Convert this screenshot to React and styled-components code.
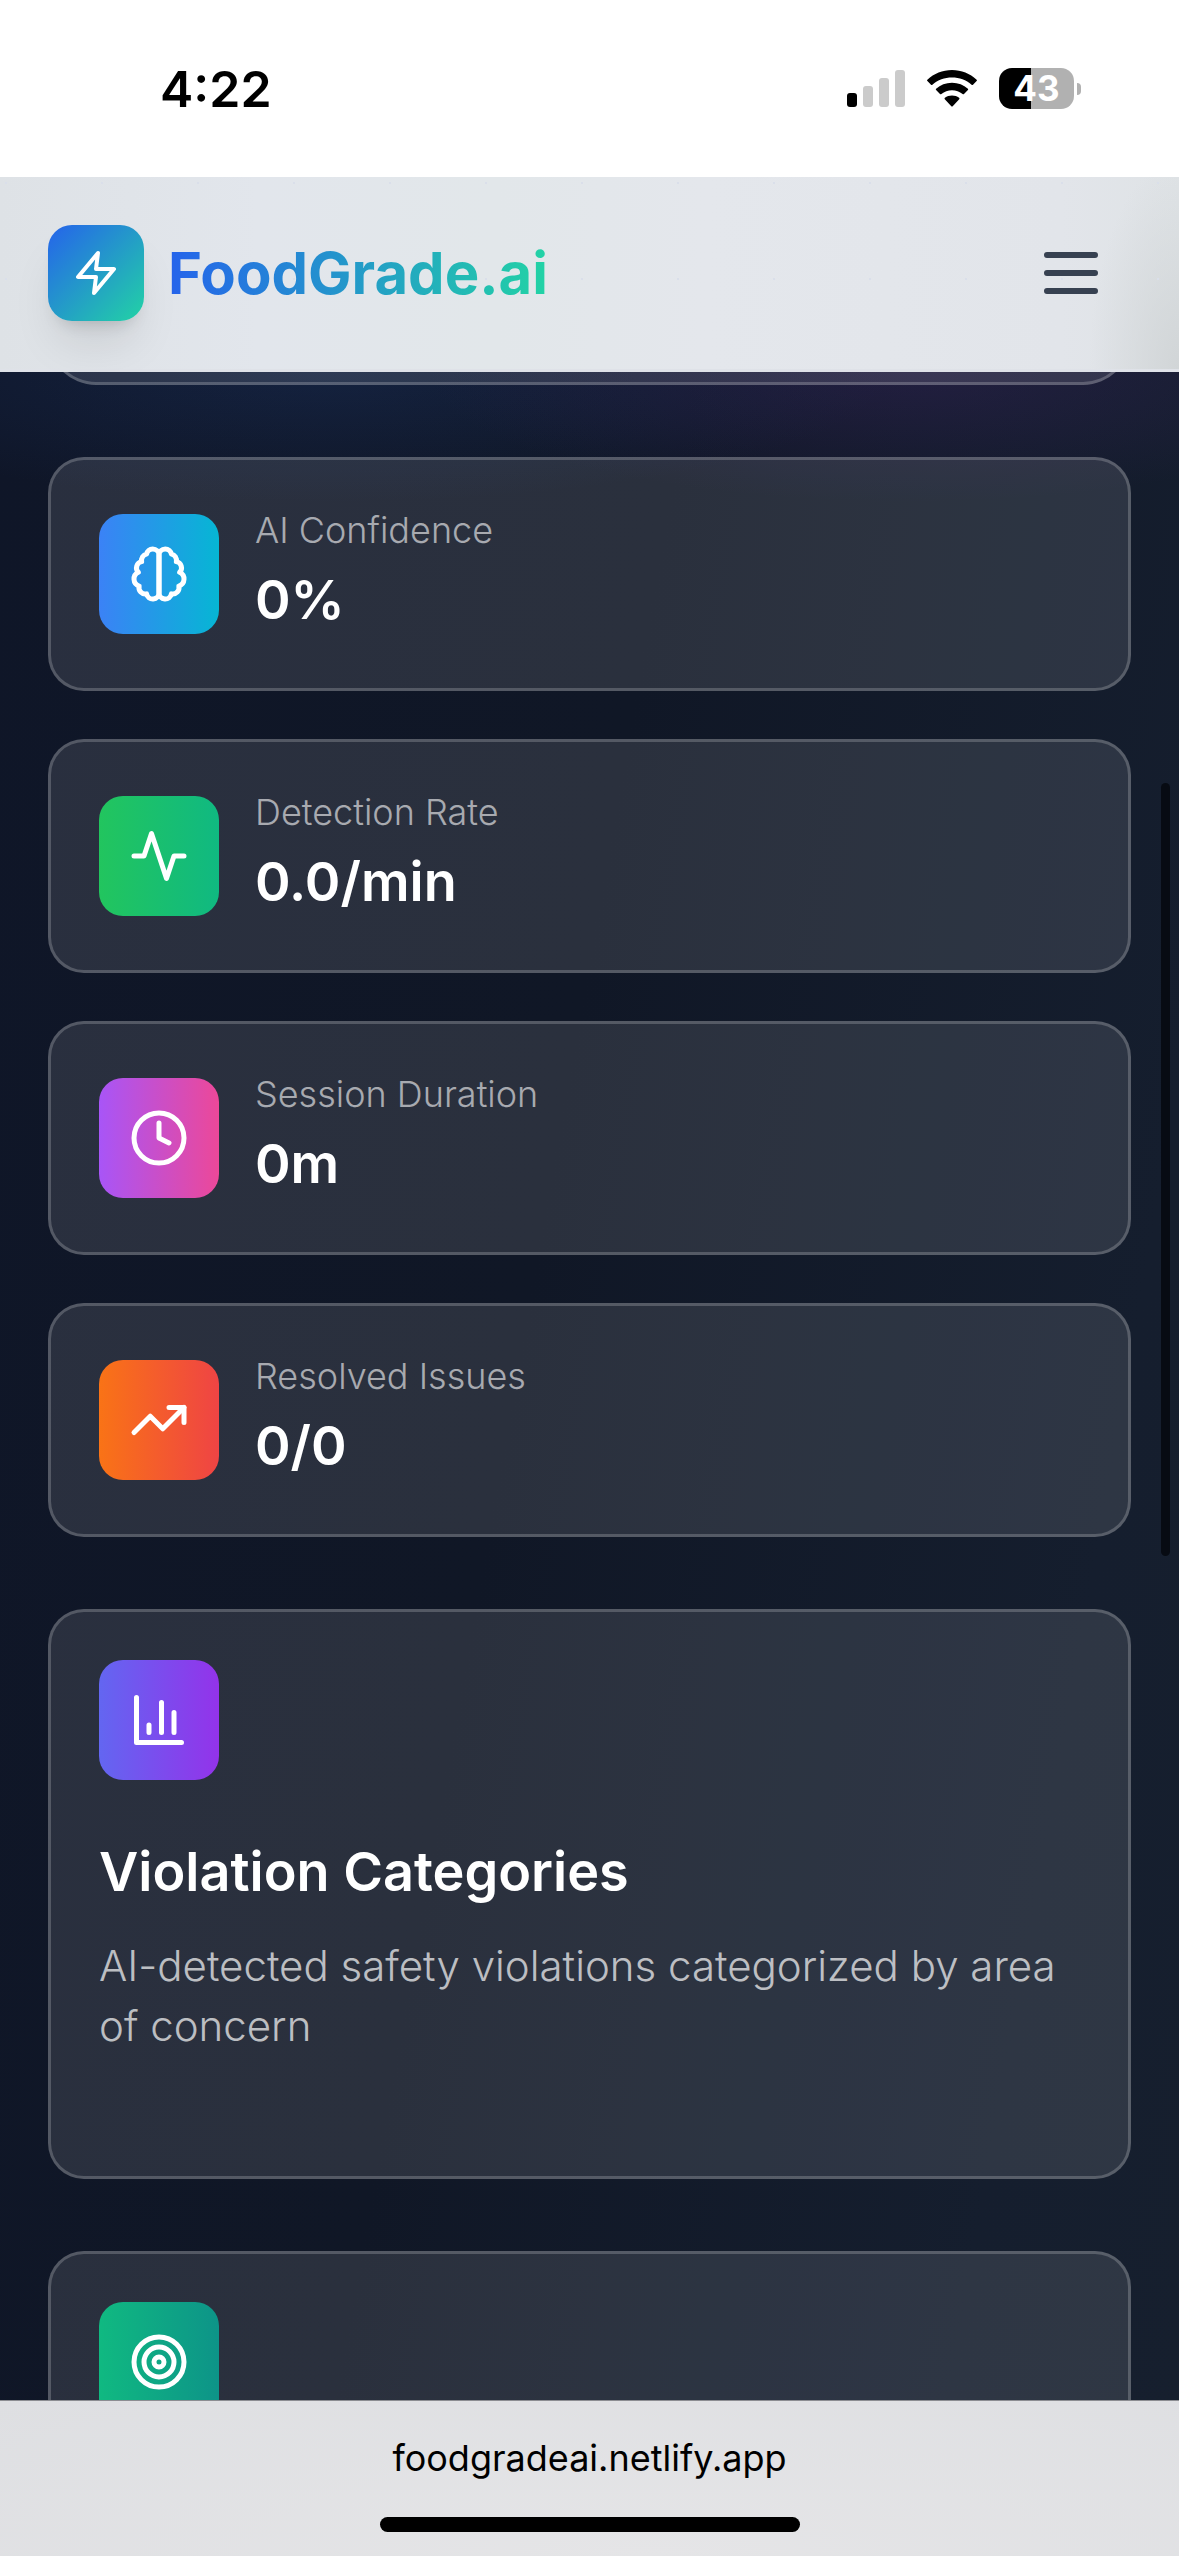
import React from 'react'
import styled, { createGlobalStyle } from 'styled-components'

const GlobalStyle = createGlobalStyle`
  *, *::before, *::after {
    box-sizing: border-box;
  }
  body {
    margin: 0;
    background: #0f172a;
    font-family: Inter, 'Liberation Sans', sans-serif;
  }
  h1, h2, p, dl, dt, dd {
    margin: 0;
    font-weight: inherit;
  }
`

const Screen = styled.div`
  display: flex;
  flex-direction: column;
  height: 100vh;
  overflow: hidden;
`

const StatusBar = styled.div`
  display: flex;
  align-items: center;
  justify-content: space-between;
  flex: none;
  height: 177px;
  padding: 0 98px 0 160px;
  background: #fff;
  color: #000;
`

const Time = styled.time`
  font-size: 50px;
  font-weight: 600;
  line-height: 60px;
`

const StatusIcons = styled.div`
  display: flex;
  align-items: center;
  gap: 22px;
`

const BatteryHolder = styled.div`
  display: flex;
  align-items: center;
  gap: 3px;
`

const Battery = styled.div`
  display: flex;
  align-items: center;
  justify-content: center;
  width: 75px;
  height: 41px;
  border-radius: 13px;
  background: linear-gradient(90deg, #000 43%, #b1b1b1 43%);
  color: #fff;
  font-size: 35px;
  font-weight: 700;
  line-height: 41px;
`

const BatteryNub = styled.div`
  width: 4px;
  height: 12px;
  border-radius: 0 4px 4px 0;
  background: #b1b1b1;
`

const Header = styled.header`
  display: flex;
  align-items: center;
  justify-content: space-between;
  flex: none;
  padding: 48px;
  border-bottom: 3px solid #dfe2e8;
  background:
    radial-gradient(circle at 6px 6px, #dadfea 1px, transparent 1px) 0 0 / 96px 96px,
    radial-gradient(ellipse 90px 210px at 100% 100%, #d1d5d7, rgba(209, 213, 215, 0)),
    linear-gradient(90deg, #dee2e6, #e2e6ec 22%, #e2e7ea 42%, #e4e7ec 60%, #e2e5ea 90%, #dfe3e6);
`

const Brand = styled.div`
  display: flex;
  align-items: center;
  gap: 24px;
`

const Logo = styled.div`
  display: flex;
  align-items: center;
  justify-content: center;
  width: 96px;
  height: 96px;
  border-radius: 24px;
  background: linear-gradient(135deg, #2563eb, #22d3a5);
  box-shadow: 0 30px 45px -9px rgba(0, 0, 0, 0.1), 0 12px 18px -12px rgba(0, 0, 0, 0.2);
  color: #fff;
`

const BrandName = styled.h1`
  background: linear-gradient(90deg, #2563eb, #22d3a5);
  background-clip: text;
  -webkit-background-clip: text;
  color: transparent;
  font-size: 58px;
  font-weight: 700;
  line-height: 84px;
`

const MenuButton = styled.button`
  display: flex;
  padding: 12px 24px;
  border: 0;
  background: none;
  color: #374151;
`

const Main = styled.main`
  position: relative;
  display: flex;
  flex-direction: column;
  flex: 1;
  gap: 72px;
  min-height: 0;
  padding: 0 48px;
  overflow: hidden;
  background:
    radial-gradient(ellipse 480px 130px at 77% 0, rgba(80, 45, 130, 0.26), rgba(80, 45, 130, 0)),
    radial-gradient(ellipse 560px 130px at 28% 0, rgba(35, 70, 140, 0.24), rgba(35, 70, 140, 0)),
    linear-gradient(100deg, #0f1628 0%, #101726 45%, #151e2e 85%, #161f2e 100%);
`

const Card = styled.section`
  flex: none;
  padding: 48px;
  border: 3px solid rgba(255, 255, 255, 0.2);
  border-radius: 36px;
  background: rgba(255, 255, 255, 0.11);
`

// end of the card that is scrolled under the header
const ScrolledCard = styled(Card)`
  height: 102px;
  margin-top: -89px;
  border-radius: 0 0 48px 48px;
`

const StatList = styled.div`
  display: flex;
  flex-direction: column;
  flex: none;
  gap: 48px;
`

const StatCard = styled(Card)`
  display: flex;
  align-items: center;
  gap: 36px;
`

const SectionCard = styled(Card)`
  padding-bottom: ${p => (p.$roomy ? 120 : 48)}px;
`

const Tile = styled.div`
  display: flex;
  align-items: center;
  justify-content: center;
  flex: none;
  width: 120px;
  height: 120px;
  border-radius: 24px;
  background: linear-gradient(90deg, ${p => p.$from}, ${p => p.$to});
  color: #fff;
`

const StatLabel = styled.dt`
  color: rgba(255, 255, 255, 0.6);
  font-size: 36px;
  font-weight: 300;
  line-height: 44px;
`

const StatValue = styled.dd`
  margin-top: 8px;
  color: #fff;
  font-size: 54px;
  font-weight: 600;
  line-height: 80px;
`

const SectionTitle = styled.h2`
  margin-top: 52px;
  color: #fff;
  font-size: 54px;
  font-weight: 600;
  line-height: 80px;
`

const SectionText = styled.p`
  margin-top: 24px;
  color: rgba(255, 255, 255, 0.7);
  font-size: 42px;
  font-weight: 300;
  line-height: 60px;
`

const ScrollThumb = styled.div`
  position: absolute;
  top: 411px;
  right: 9px;
  width: 9px;
  height: 773px;
  border-radius: 5px;
  background: #070b13;
`

const AddressBar = styled.footer`
  display: flex;
  flex-direction: column;
  align-items: center;
  flex: none;
  gap: 35px;
  padding: 33px 0 24px;
  border-top: 1px solid #8c8d92;
  background: radial-gradient(ellipse at 55% 100%, #e5e5e7, #dedfe2);
`

const Address = styled.a`
  color: #000;
  font-size: 36px;
  line-height: 48px;
  text-decoration: none;
`

const HomeIndicator = styled.div`
  width: 420px;
  height: 15px;
  border-radius: 8px;
  background: #000;
`

const Icon = ({ size = 60, children }) => (
  <svg
    width={size}
    height={size}
    viewBox="0 0 24 24"
    fill="none"
    stroke="currentColor"
    strokeWidth="2"
    strokeLinecap="round"
    strokeLinejoin="round"
    aria-hidden="true"
  >
    {children}
  </svg>
)

const IconTile = ({ from, to, children }) => (
  <Tile $from={from} $to={to}>
    <Icon>{children}</Icon>
  </Tile>
)

const stats = [
  {
    label: 'AI Confidence',
    value: '0%',
    from: '#3b82f6',
    to: '#06b6d4',
    icon: (
      <>
        <path d="M9.5 2A2.5 2.5 0 0 1 12 4.5v15a2.5 2.5 0 0 1-4.96.44 2.5 2.5 0 0 1-2.96-3.08 3 3 0 0 1-.34-5.58 2.5 2.5 0 0 1 1.32-4.24 2.5 2.5 0 0 1 1.98-3A2.5 2.5 0 0 1 9.5 2Z" />
        <path d="M14.5 2A2.5 2.5 0 0 0 12 4.5v15a2.5 2.5 0 0 0 4.96.44 2.5 2.5 0 0 0 2.96-3.08 3 3 0 0 0 .34-5.58 2.5 2.5 0 0 0-1.32-4.24 2.5 2.5 0 0 0-1.98-3A2.5 2.5 0 0 0 14.5 2Z" />
      </>
    ),
  },
  {
    label: 'Detection Rate',
    value: '0.0/min',
    from: '#22c55e',
    to: '#10b981',
    icon: <path d="M22 12h-4l-3 9L9 3l-3 9H2" />,
  },
  {
    label: 'Session Duration',
    value: '0m',
    from: '#a855f7',
    to: '#ec4899',
    icon: (
      <>
        <circle cx="12" cy="12" r="10" />
        <polyline points="12 6 12 12 16 14" />
      </>
    ),
  },
  {
    label: 'Resolved Issues',
    value: '0/0',
    from: '#f97316',
    to: '#ef4444',
    icon: (
      <>
        <polyline points="22 7 13.5 15.5 8.5 10.5 2 17" />
        <polyline points="16 7 22 7 22 13" />
      </>
    ),
  },
]

const SignalIcon = () => (
  <svg width="58" height="37" viewBox="0 0 58 37" aria-hidden="true">
    <rect x="0" y="23" width="10" height="14" rx="3" fill="#000" />
    <rect x="16" y="16" width="10" height="21" rx="3" fill="#cbcbcb" />
    <rect x="32" y="8" width="10" height="29" rx="3" fill="#cbcbcb" />
    <rect x="48" y="0" width="10" height="37" rx="3" fill="#cbcbcb" />
  </svg>
)

const WifiIcon = () => (
  <svg width="50" height="37" viewBox="0 0 50 37" aria-hidden="true">
    <path d="M25 0C34.5 0 43 3.6 49.6 9.7Q50.3 10.4 49.6 11.1L46 14.7Q45.3 15.4 44.6 14.7C39.2 9.9 32.4 7.5 25 7.5S10.8 9.900 5.4 14.7Q4.700 15.400 4 14.7L.4 11.1Q-.3 10.400.4 9.700C7 3.600 15.5 0 25 0Z" />
    <path d="M25 12.7C31.2 12.7 36.6 14.9 40.9 18.7Q41.6 19.4 40.9 20.1L37 24Q36.3 24.7 35.6 24C32.6 21.5 29 20.2 25 20.2S17.4 21.5 14.4 24Q13.7 24.7 13 24L9.1 20.1Q8.4 19.4 9.1 18.7C13.4 14.9 18.8 12.7 25 12.7Z" />
    <path d="M25 25.5C27.7 25.5 30.1 26.3 32.1 27.8Q32.9 28.5 32.2 29.2L25.7 36.2Q25 36.9 24.3 36.2L17.8 29.2Q17.1 28.5 17.9 27.8C19.9 26.3 22.3 25.5 25 25.5Z" />
  </svg>
)

const App = () => (
  <Screen>
    <GlobalStyle />
    <StatusBar>
      <Time>4:22</Time>
      <StatusIcons>
        <SignalIcon />
        <WifiIcon />
        <BatteryHolder>
          <Battery>43</Battery>
          <BatteryNub />
        </BatteryHolder>
      </StatusIcons>
    </StatusBar>
    <Header>
      <Brand>
        <Logo>
          <Icon size={48}>
            <polygon points="13 2 3 14 12 14 11 22 21 10 12 10 13 2" />
          </Icon>
        </Logo>
        <BrandName>FoodGrade.ai</BrandName>
      </Brand>
      <MenuButton type="button" aria-label="Open menu">
        <Icon size={72}>
          <path d="M4 6h16M4 12h16M4 18h16" />
        </Icon>
      </MenuButton>
    </Header>
    <Main>
      <ScrolledCard />
      <StatList>
        {stats.map(({ label, value, from, to, icon }) => (
          <StatCard key={label}>
            <IconTile from={from} to={to}>{icon}</IconTile>
            <dl>
              <StatLabel>{label}</StatLabel>
              <StatValue>{value}</StatValue>
            </dl>
          </StatCard>
        ))}
      </StatList>
      <SectionCard $roomy>
        <IconTile from="#6366f1" to="#9333ea">
          <path d="M3 3v18h18M18 17V9M13 17V5M8 17v-3" />
        </IconTile>
        <SectionTitle>Violation Categories</SectionTitle>
        <SectionText>AI-detected safety violations categorized by area of concern</SectionText>
      </SectionCard>
      <SectionCard>
        <IconTile from="#10b981" to="#0d9488">
          <circle cx="12" cy="12" r="10" />
          <circle cx="12" cy="12" r="6" />
          <circle cx="12" cy="12" r="2" />
        </IconTile>
      </SectionCard>
      <ScrollThumb />
    </Main>
    <AddressBar>
      <Address href="#">foodgradeai.netlify.app</Address>
      <HomeIndicator />
    </AddressBar>
  </Screen>
)

export default App
